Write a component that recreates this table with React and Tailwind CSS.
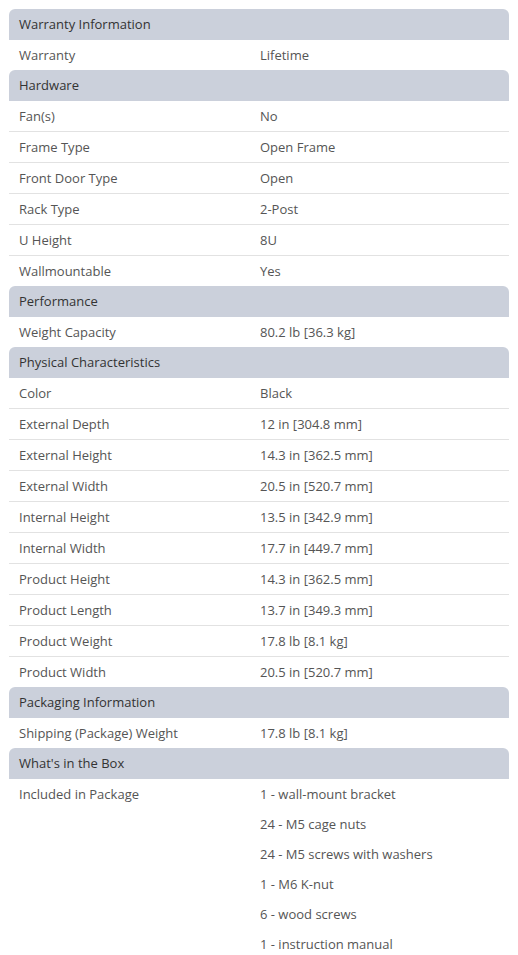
import React from "react";

const sections = [
  { title: "Warranty Information", rows: [["Warranty", "Lifetime"]] },
  {
    title: "Hardware",
    rows: [
      ["Fan(s)", "No"],
      ["Frame Type", "Open Frame"],
      ["Front Door Type", "Open"],
      ["Rack Type", "2-Post"],
      ["U Height", "8U"],
      ["Wallmountable", "Yes"],
    ],
  },
  { title: "Performance", rows: [["Weight Capacity", "80.2 lb [36.3 kg]"]] },
  {
    title: "Physical Characteristics",
    rows: [
      ["Color", "Black"],
      ["External Depth", "12 in [304.8 mm]"],
      ["External Height", "14.3 in [362.5 mm]"],
      ["External Width", "20.5 in [520.7 mm]"],
      ["Internal Height", "13.5 in [342.9 mm]"],
      ["Internal Width", "17.7 in [449.7 mm]"],
      ["Product Height", "14.3 in [362.5 mm]"],
      ["Product Length", "13.7 in [349.3 mm]"],
      ["Product Weight", "17.8 lb [8.1 kg]"],
      ["Product Width", "20.5 in [520.7 mm]"],
    ],
  },
  { title: "Packaging Information", rows: [["Shipping (Package) Weight", "17.8 lb [8.1 kg]"]] },
  {
    title: "What's in the Box",
    rows: [
      [
        "Included in Package",
        [
          "1 - wall-mount bracket",
          "24 - M5 cage nuts",
          "24 - M5 screws with washers",
          "1 - M6 K-nut",
          "6 - wood screws",
          "1 - instruction manual",
        ],
      ],
    ],
  },
];

export default function App() {
  return (
    <div
      className="bg-white p-[9px] text-[13px]"
      style={{ fontFamily: '"Open Sans", sans-serif' }}
    >
      <div className="w-[500px]">
        {sections.map((s) => (
          <div key={s.title}>
            <div className="h-[31px] flex items-center px-[10px] bg-[#cbd0db] rounded-t-[6px] text-[#333]">
              {s.title}
            </div>
            {s.rows.map(([k, v], i) => (
              <div
                key={k}
                className={
                  "grid grid-cols-[241px_1fr] text-[#555] " +
                  (i < s.rows.length - 1 ? "border-b border-[#e2e2e2]" : "")
                }
              >
                <div className="h-[30px] flex items-center px-[10px] pt-[2px]">{k}</div>
                {Array.isArray(v) ? (
                  <div className="flex flex-col">
                    {v.map((item) => (
                      <div key={item} className="h-[30px] flex items-center px-[10px] pt-[2px]">
                        {item}
                      </div>
                    ))}
                  </div>
                ) : (
                  <div className="h-[30px] flex items-center px-[10px] pt-[2px]">{v}</div>
                )}
              </div>
            ))}
          </div>
        ))}
      </div>
    </div>
  );
}
